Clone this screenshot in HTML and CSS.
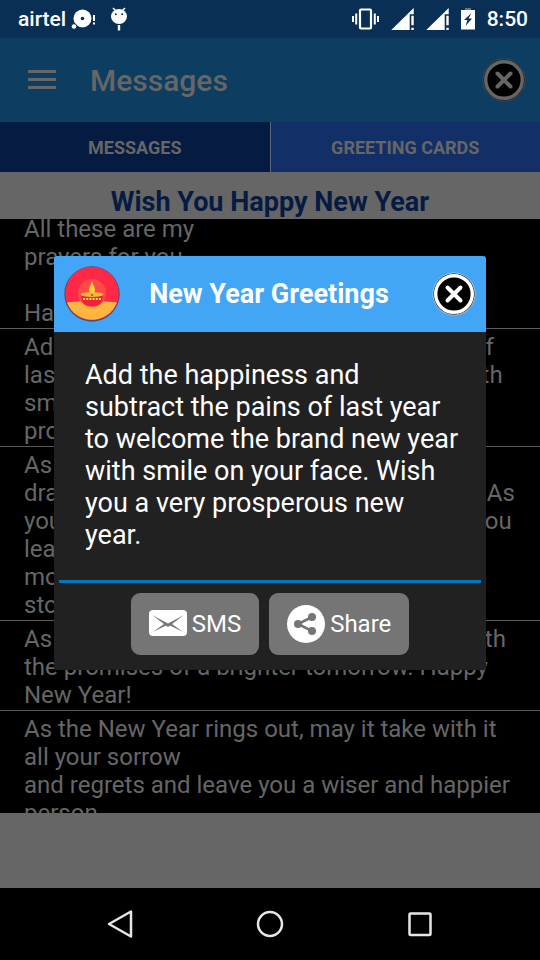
FILE: index.html
```html
<!DOCTYPE html>
<html lang="en">
<head>
<meta charset="utf-8">
<meta name="viewport" content="width=device-width, initial-scale=1">
<title>Messages</title>
<link rel="stylesheet" href="styles.css">
</head>
<body>
<svg class="defs" aria-hidden="true">
  <symbol id="close" viewBox="0 0 44 44">
    <circle cx="22" cy="22" r="21" fill="#0b0b0b" stroke="currentColor" stroke-width="1" stroke-opacity=".6"/>
    <circle cx="22" cy="22" r="18.3" fill="#000" stroke="currentColor" stroke-width="3.400"/>
    <path d="M15.500 15.500 28.500 28.500M28.500 15.500 15.500 28.500" stroke="currentColor" stroke-width="4" stroke-linecap="round"/>
  </symbol>
  <symbol id="signal" viewBox="0 0 24 24">
    <path d="M23.700 0v6.500H19.500V23H.300z" fill="#fff"/>
    <path d="M21.200 8h2.500v10h-2.500zM21.200 20.500h2.500V23h-2.500z" fill="#fff"/>
  </symbol>
</svg>
<div class="screen">
  <div class="status">
    <span>airtel</span>
    <svg class="notice" width="26" height="22" viewBox="0 0 26 22" aria-hidden="true">
      <circle cx="11.500" cy="10.500" r="9" fill="#fff"/><circle cx="11.500" cy="10.500" r="1.800" fill="#0a2f55"/>
      <circle cx="3" cy="18.500" r="2.800" fill="#fff" stroke="#0a2f55"/>
      <path d="M22 7h2v6h-2zM22 14.500h2v2h-2z" fill="#fff"/>
    </svg>
    <svg class="droid" width="18" height="24" viewBox="0 0 18 24" aria-hidden="true">
      <path d="M3 1l3 3M15 1l-3 3" stroke="#fff" stroke-width="1.500"/>
      <ellipse cx="9" cy="9.500" rx="8" ry="7.500" fill="#fff"/>
      <circle cx="5.800" cy="7.200" r="1" fill="#0a2f55"/><circle cx="12.200" cy="7.200" r="1" fill="#0a2f55"/>
      <path d="M9 18v5.500" stroke="#fff" stroke-width="2.400"/>
    </svg>
    <div class="indicators">
      <svg width="27" height="22" viewBox="0 0 27 22" aria-hidden="true">
        <rect x="8" y="1.500" width="11" height="19" rx="1" fill="none" stroke="#fff" stroke-width="2.200"/>
        <path d="M1 8v6M26 8v6" stroke="#fff" stroke-width="2"/><path d="M4.200 5.500v11M22.800 5.500v11" stroke="#fff" stroke-width="2"/>
      </svg>
      <svg width="23" height="23"><use href="#signal"/></svg>
      <svg width="23" height="23"><use href="#signal"/></svg>
      <svg width="14" height="22" viewBox="0 0 14 22" aria-hidden="true">
        <path d="M4 0h6v2H4z" fill="#5e7690"/><path d="M0 2h14v19.500H0z" fill="#fff"/>
        <path d="M10.500 5L3 12h3.500l-2 6L11 10.500H7.500z" fill="#0a2f55"/>
      </svg>
      <time>8:50</time>
    </div>
  </div>
  <header class="bar">
    <button class="icon-button" aria-label="Open menu">
      <svg width="28" height="22" viewBox="0 0 28 22"><path d="M0 2.500h28M0 10.500h28M0 18.500h28" stroke="#666" stroke-width="3"/></svg>
    </button>
    <h1>Messages</h1>
    <button class="icon-button close dim" aria-label="Exit"><svg width="44" height="44"><use href="#close"/></svg></button>
  </header>
  <nav class="tabs">
    <button class="tab selected">MESSAGES</button>
    <button class="tab">GREETING CARDS</button>
  </nav>
  <h2 class="heading">Wish You Happy New Year</h2>
  <main class="viewport">
    <ul class="messages">
      <li>All these are my<br>prayers for you<br><br>Happy New Year</li>
      <li>Add the happiness and subtract the pains of<br>last year to welcome the brand new year with<br>smile on your face. Wish you a very<br>prosperous new year.</li>
      <li>As the new year begins,<br>draw a new page in the books of your lives. As<br>you turn it, may the old year gone by gives you<br>learning and many<br>more beautiful<br>stories.</li>
      <li>As the new year dawns, may it fill our life with<br>the promises of a brighter tomorrow. Happy<br>New Year!</li>
      <li>As the New Year rings out, may it take with it<br>all your sorrow<br>and regrets and leave you a wiser and happier<br>person.</li>
    </ul>
  </main>
  <div class="banner"></div>
  <nav class="system">
    <button aria-label="Back"><svg width="28" height="30" viewBox="0 0 28 30"><path d="M25 2.500v25L3 15z" fill="none" stroke="#e6e6e6" stroke-width="2.500" stroke-linejoin="round"/></svg></button>
    <button aria-label="Home"><svg width="28" height="30" viewBox="0 0 28 30"><circle cx="14" cy="15" r="12" fill="none" stroke="#e6e6e6" stroke-width="2.500"/></svg></button>
    <button aria-label="Recent apps"><svg width="28" height="30" viewBox="0 0 28 30"><rect x="3.500" y="4.500" width="21" height="21.500" rx="1" fill="none" stroke="#e6e6e6" stroke-width="2.500"/></svg></button>
  </nav>
  <div class="overlay">
    <section class="dialog" role="dialog" aria-labelledby="dialog-title">
      <header class="dialog-head">
        <svg width="56" height="58" viewBox="0 0 56 58" aria-hidden="true">
          <circle cx="28" cy="29" r="27.700" fill="#554a70"/>
          <circle cx="28" cy="28.500" r="26.700" fill="#ff2947"/>
          <path d="M3 37.500Q28 34 53 37.500A26.700 26.700 0 0 1 3 37.500z" fill="#ffb640"/>
          <circle cx="28" cy="28" r="14" fill="#ff4a45"/>
          <path d="M17 30h22c0 7-4 11-8 11h-6c-4 0-8-4-8-11z" fill="#f5203c"/>
          <ellipse cx="28" cy="29.500" rx="11.500" ry="2.500" fill="#f8b53a"/>
          <path d="M28 16c1 4 3 6 3 9a3 3 0 0 1-6 0c0-3 2-5 3-9z" fill="#ffd633"/>
          <circle cx="28" cy="30" r="1" fill="#8d5928"/>
          <path d="M19 34h18" stroke="#ffe066" stroke-width="2.200" stroke-dasharray="2 1.200"/>
        </svg>
        <h2 id="dialog-title">New Year Greetings</h2>
        <button class="icon-button close" aria-label="Close"><svg width="44" height="44"><use href="#close"/></svg></button>
      </header>
      <p>Add the happiness and subtract the pains of last year to welcome the brand new year with smile on your face. Wish you a very prosperous new year.</p>
      <footer class="actions">
        <button class="action">
          <svg width="38" height="38" viewBox="0 0 38 38" aria-hidden="true">
            <rect y="5" width="38" height="26" rx="4" fill="#fff"/>
            <path d="M3 10l12 9L4 27l13-6.500 2 1.500 2-1.500L34 27l-11-8 12-9-16 8.500z" fill="#757575"/>
          </svg>SMS
        </button>
        <button class="action">
          <svg width="38" height="38" viewBox="0 0 38 38" aria-hidden="true">
            <circle cx="19" cy="19" r="19" fill="#fff"/>
            <path d="M25 12L11 19l14 7" fill="none" stroke="#757575" stroke-width="2.600"/>
            <circle cx="25" cy="12" r="4" fill="#757575"/><circle cx="11" cy="19" r="4" fill="#757575"/><circle cx="25" cy="26" r="4" fill="#757575"/>
          </svg>Share
        </button>
      </footer>
    </section>
  </div>
</div>
</body>
</html>
```
FILE: styles.css
```css
* { box-sizing: border-box; }
body, h1, h2, p, ul { margin: 0; padding: 0; }
body { background: #000; font-family: Roboto, "Liberation Sans", sans-serif; }
button { border: 0; margin: 0; padding: 0; background: none; color: inherit; font: inherit; }
svg { display: block; flex: none; }
.defs { position: absolute; width: 0; height: 0; }
.screen { position: relative; display: flex; flex-direction: column; height: 100vh; min-height: 760px; overflow: hidden; }

.status { display: flex; align-items: center; flex: none; height: 38px; padding: 0 12px 0 18px; background: #0a2f55; color: #fff; font-size: 21px; font-weight: 500; }
.notice { margin-left: 5px; }
.droid { margin-left: 13px; }
.indicators { display: flex; align-items: center; gap: 12px; margin-left: auto; }

.bar { display: flex; align-items: center; flex: none; height: 84px; padding: 0 14px 0 28px; background: #0d3d60; color: #666; }
.bar h1 { flex: 1; margin-left: 34px; font-size: 30px; font-weight: 500; }
.close { color: #fff; }
.close.dim { color: #666; }

.tabs { display: flex; flex: none; height: 50px; background: #596579; color: #666; gap: 1px; }
.tab { flex: 1; background: #123067; font-size: 18px; font-weight: 700; }
.tab.selected { background: #051b42; }

.heading { flex: none; height: 47px; padding-top: 12px; background: #666; color: #051b42; font-size: 27px; line-height: 36px; font-weight: 700; text-align: center; }

.viewport { flex: 1; min-height: 0; overflow: hidden; background: #000; }
.messages { margin-top: -8px; list-style: none; color: #666; font-size: 24px; line-height: 28px; }
.messages li { padding: 4px 24px 1px; border-bottom: 1px solid #5a5a5a; white-space: nowrap; }

.banner { flex: none; height: 75px; background: #666; }
.system { display: flex; justify-content: center; align-items: center; gap: 122px; flex: none; height: 72px; background: #000; }

.overlay { position: absolute; inset: 38px 0 72px; display: flex; align-items: center; justify-content: center; }
.dialog { width: 80%; border-radius: 3px; overflow: hidden; background: #212121; color: #fff; }
.dialog-head { display: flex; align-items: center; height: 76px; padding: 0 10px; background: #42a5f5; }
.dialog-head h2 { flex: 1; padding-right: 14px; font-size: 27px; line-height: 32px; font-weight: 700; text-align: center; }
.dialog p { padding: 27px 24px 29px 31px; font-size: 27px; line-height: 32px; }
.actions { display: flex; justify-content: center; gap: 10px; margin: 0 5px; padding: 10px 0 15px; border-top: 3px solid #0277bd; }
.action { display: flex; align-items: center; gap: 5px; height: 62px; padding: 0 18px; border-radius: 9px; background: #757575; color: #fff; font-size: 24px; }
```
